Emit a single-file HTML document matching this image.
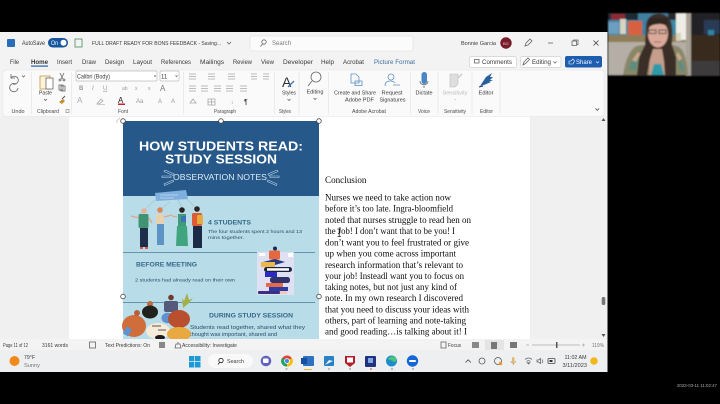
<!DOCTYPE html>
<html><head><meta charset="utf-8"><style>
html,body{margin:0;padding:0;background:#000;width:720px;height:404px;overflow:hidden}
svg{display:block}
text{font-family:"Liberation Sans",sans-serif;fill:#3a3a3a;font-size:6px}
.s{font-family:"Liberation Serif",serif;fill:#0c0c0c;font-size:9.4px}
.t{font-size:6.4px;fill:#3a3a3a}
.g{font-size:5px;fill:#4a4a4a;text-anchor:middle}
.r{font-size:5px;fill:#3a3a3a;text-anchor:middle}
.w{font-weight:bold;fill:#fff}
.b{font-size:4.6px;fill:#2a4d66}
.h{font-weight:bold;fill:#356789}
.ic{fill:none;stroke:#666;stroke-width:.8}
</style></head><body>
<svg width="720" height="404" viewBox="0 0 720 404" xmlns="http://www.w3.org/2000/svg">
<defs><filter id="bl" x="-5%" y="-5%" width="110%" height="110%"><feGaussianBlur stdDeviation="0.35"/></filter>
<filter id="bl2" x="-5%" y="-5%" width="110%" height="110%"><feGaussianBlur stdDeviation="0.9"/></filter></defs>
<rect width="720" height="404" fill="#000"/>
<g filter="url(#bl)">
<!-- window -->
<rect x="0" y="32" width="607.500" height="340" fill="#f3f3f3"/>
<!-- doc area -->
<rect x="0" y="116" width="607" height="223" fill="#f0f0f0"/>
<rect x="69" y="116" width="461" height="223" fill="#fff"/>
<!-- title bar -->
<rect x="7" y="39" width="8" height="8" rx="1" fill="#2b6cb8"/>
<text x="22" y="45" textLength="23" lengthAdjust="spacingAndGlyphs">AutoSave</text>
<rect x="48" y="38" width="20" height="9.500" rx="4.700" fill="#15559f"/>
<text x="51" y="45" textLength="7" lengthAdjust="spacingAndGlyphs" style="fill:#fff">On</text>
<circle cx="63.500" cy="42.700" r="3" fill="#fff"/>
<rect x="75" y="39" width="7" height="8" class="ic" style="stroke:#4d8a5a"/>
<text x="92" y="45" textLength="129" lengthAdjust="spacingAndGlyphs" style="font-size:5.800px">FULL DRAFT READY FOR BONS FEEDBACK - Saving...</text>
<path d="M227 42l2 2 2-2" class="ic"/>
<rect x="250" y="36" width="163" height="15" rx="2" fill="#fbfbfb" stroke="#e2e2e2" stroke-width=".7"/>
<circle cx="264" cy="42" r="2.200" class="ic"/><path d="M262.500 44l-2 2.500" class="ic"/>
<text x="272" y="45" textLength="19" lengthAdjust="spacingAndGlyphs" style="fill:#777">Search</text>
<text x="461" y="45" textLength="35" lengthAdjust="spacingAndGlyphs" style="font-size:5.800px">Bonnie Garcia</text>
<circle cx="506" cy="43" r="5.700" fill="#761a2c"/>
<text x="503" y="45" style="font-size:4px;fill:#e8c0c0">BG</text>
<path d="M525 46l1-3 4-4 2 2-4 4z" class="ic"/>
<path d="M548 43h5" class="ic"/>
<rect x="572" y="41" width="4.500" height="4.500" class="ic"/><path d="M573.500 41v-1h4.500v4.500h-1.300" class="ic"/>
<path d="M593.500 40.500l5 5m0-5l-5 5" class="ic" style="stroke:#444"/>
<!-- tabs -->
<text x="10" y="64" class="t" textLength="9" lengthAdjust="spacingAndGlyphs">File</text>
<text x="31" y="64" class="t" textLength="17" lengthAdjust="spacingAndGlyphs" style="font-weight:bold;fill:#333">Home</text>
<rect x="31" y="65.500" width="17" height="1.200" fill="#2b5f9e"/>
<text x="57" y="64" class="t" textLength="15" lengthAdjust="spacingAndGlyphs">Insert</text>
<text x="82" y="64" class="t" textLength="14" lengthAdjust="spacingAndGlyphs">Draw</text>
<text x="105" y="64" class="t" textLength="19" lengthAdjust="spacingAndGlyphs">Design</text>
<text x="133" y="64" class="t" textLength="19" lengthAdjust="spacingAndGlyphs">Layout</text>
<text x="161" y="64" class="t" textLength="30" lengthAdjust="spacingAndGlyphs">References</text>
<text x="200" y="64" class="t" textLength="24" lengthAdjust="spacingAndGlyphs">Mailings</text>
<text x="233" y="64" class="t" textLength="19" lengthAdjust="spacingAndGlyphs">Review</text>
<text x="261" y="64" class="t" textLength="13" lengthAdjust="spacingAndGlyphs">View</text>
<text x="283" y="64" class="t" textLength="30" lengthAdjust="spacingAndGlyphs">Developer</text>
<text x="321" y="64" class="t" textLength="13" lengthAdjust="spacingAndGlyphs">Help</text>
<text x="343" y="64" class="t" textLength="21" lengthAdjust="spacingAndGlyphs">Acrobat</text>
<text x="374" y="64" class="t" textLength="41" lengthAdjust="spacingAndGlyphs" style="fill:#3f6d9e">Picture Format</text>
<rect x="469.500" y="56.500" width="47" height="11" rx="2" fill="#fff" stroke="#cfcfcf" stroke-width=".7"/>
<rect x="474.500" y="59.500" width="4.500" height="3.500" class="ic"/>
<text x="482" y="64" textLength="30" lengthAdjust="spacingAndGlyphs">Comments</text>
<rect x="520.500" y="56.500" width="40.500" height="11" rx="2" fill="#fff" stroke="#cfcfcf" stroke-width=".7"/>
<path d="M523 65l1-3 4-4 1.500 1.500-4 4z" class="ic"/>
<text x="532" y="64" textLength="19" lengthAdjust="spacingAndGlyphs">Editing</text>
<path d="M553.500 61.500l1.500 1.500 1.500-1.500" class="ic"/>
<rect x="565" y="56" width="37" height="11.500" rx="2" fill="#1b5db0"/>
<text x="576" y="64" textLength="16" lengthAdjust="spacingAndGlyphs" style="fill:#fff">Share</text>
<path d="M569 64v-3h2l2-2 1.500 2-1.500 3z" fill="none" stroke="#fff" stroke-width=".6"/>
<path d="M596 61.500l1.500 1.500 1.500-1.500" fill="none" stroke="#fff" stroke-width=".6"/>
<!-- ribbon -->
<rect x="3" y="70" width="601" height="46.500" rx="3" fill="#fafafa" stroke="#e4e4e4" stroke-width=".6"/>
<g stroke="#e2e2e2" stroke-width=".6">
<path d="M31.500 72v42M71.500 72v42M183.500 72v42M274.500 72v42M299 72v42M328.500 72v42M410.500 72v42M438 72v42M472 72v42M500 72v42"/>
</g>
<!-- undo -->
<path d="M11 78a4 4 0 1 1 2 6M11 74v4h4" class="ic"/><path d="M22 75.500l1.500 1.500 1.500-1.500" class="ic"/>
<path d="M18 88a4.200 4.200 0 1 1-2-4" class="ic"/>
<text x="18" y="113" class="g" textLength="13" lengthAdjust="spacingAndGlyphs">Undo</text>
<!-- paste -->
<rect x="40" y="76" width="10" height="13" fill="#fbf2dd" stroke="#c89a3f" stroke-width=".8"/>
<rect x="46" y="78" width="7" height="11" fill="#fff" stroke="#555" stroke-width=".7"/>
<text x="45.500" y="94.500" class="r" textLength="13" lengthAdjust="spacingAndGlyphs">Paste</text>
<path d="M44 99l1.500 1.500 1.500-1.500" class="ic"/>
<path d="M60 73l3 6m1-6l-3 6" class="ic"/><circle cx="60" cy="80" r="1" class="ic"/><circle cx="64" cy="80" r="1" class="ic"/>
<rect x="59" y="85" width="4" height="5" class="ic"/><rect x="61" y="86" width="4" height="5" class="ic"/>
<path d="M59 102l4-3 2 2-3 3z" fill="#c98f2b"/><path d="M62 99l3-3" stroke="#555" stroke-width="1"/>
<text x="48" y="113" class="g" textLength="22" lengthAdjust="spacingAndGlyphs">Clipboard</text>
<rect x="66" y="109.500" width="3" height="3" class="ic" style="stroke-width:.5"/>
<!-- font -->
<rect x="76" y="71" width="81" height="10" rx="1" fill="#fff" stroke="#bdbdbd" stroke-width=".7"/>
<text x="77" y="78.500" textLength="33" lengthAdjust="spacingAndGlyphs">Calibri (Body)</text>
<path d="M154 75.500l1 1 1-1" class="ic"/>
<rect x="160" y="71" width="19" height="10" rx="1" fill="#fff" stroke="#bdbdbd" stroke-width=".7"/>
<text x="161" y="78.500">11</text><path d="M175.500 75.500l1 1 1-1" class="ic"/>
<g style="font-size:6px">
<text x="79" y="90" style="font-weight:bold;fill:#999">B</text>
<text x="92" y="90" style="font-style:italic;fill:#999">I</text>
<text x="103" y="90" style="text-decoration:underline;fill:#999">U</text>
<text x="122" y="90" style="fill:#999;font-size:5px">ab</text>
<text x="135" y="90" style="fill:#999;font-size:5px">x</text>
<text x="148" y="90" style="fill:#999;font-size:5px">x</text>
<text x="160" y="91" style="fill:#777;font-size:8px">A</text>
<text x="77" y="103" style="fill:#aaa;font-size:8px">A</text>
<text x="118" y="103" style="fill:#222;font-size:8px">A</text>
<text x="136" y="103" style="fill:#999">Aa</text>
<text x="158" y="103" style="fill:#999">A</text>
<text x="171" y="103" style="fill:#999">A</text>
</g>
<rect x="118" y="103.500" width="7" height="1.500" fill="#d0242b"/>
<path d="M97 104l4-5 2 2-4 3z" class="ic" style="stroke:#aaa"/><rect x="97" y="104" width="8" height="1" fill="#ccc"/>
<text x="123" y="113" class="g" textLength="10" lengthAdjust="spacingAndGlyphs">Font</text>
<!-- paragraph -->
<g stroke="#a8a8a8" stroke-width=".8" fill="none">
<path d="M189 74h7M189 76.500h7M189 79h7M208 74h7M208 76.500h7M208 79h7M228 74h7M228 76.500h7M228 79h7M251 74h6M251 76.500h6M251 79h6M263 74h6M263 76.500h6M263 79h6"/>
<path d="M189 86h7M189 88.500h7M189 91h7M201 86h7M201 88.500h7M201 91h7M214 86h7M214 88.500h7M214 91h7M226 86h7M226 88.500h7M226 91h7M240 86h7M240 88.500h7M240 91h7"/>
<path d="M190 103l3-4 3 4zM208 99h7v6h-7zM208 102h7M211.500 99v6"/>
</g>
<text x="231" y="104" style="font-size:5px;fill:#888">↕</text>
<text x="244" y="104" style="font-size:7px;fill:#333">¶</text>
<text x="225" y="113" class="g" textLength="22" lengthAdjust="spacingAndGlyphs">Paragraph</text>
<!-- styles -->
<text x="282" y="87" style="font-size:14px;fill:#333">A</text>
<path d="M288 87l6-6" stroke="#3f73b5" stroke-width="1.300"/>
<text x="289" y="94.500" class="r" textLength="14" lengthAdjust="spacingAndGlyphs">Styles</text>
<path d="M287.500 99l1.500 1.500 1.500-1.500" class="ic"/>
<text x="285" y="113" class="g" textLength="12" lengthAdjust="spacingAndGlyphs">Styles</text>
<!-- editing -->
<circle cx="316" cy="77" r="5" class="ic"/><path d="M312 81l-4 5" class="ic"/>
<text x="315" y="93.500" class="r" textLength="17" lengthAdjust="spacingAndGlyphs">Editing</text>
<path d="M313.500 98l1.500 1.500 1.500-1.500" class="ic"/>
<!-- adobe -->
<path d="M351 74h5l3 3v6h-8z" fill="none" stroke="#5e92bf" stroke-width=".8"/><rect x="355" y="81" width="7" height="4.500" fill="none" stroke="#5e92bf" stroke-width=".8"/>
<text x="355" y="94.500" class="r" textLength="42" lengthAdjust="spacingAndGlyphs">Create and Share</text>
<text x="359.500" y="101.500" class="r" textLength="29" lengthAdjust="spacingAndGlyphs" style="font-size:5px">Adobe PDF</text>
<circle cx="391" cy="77" r="3" fill="none" stroke="#5e92bf" stroke-width=".8"/><path d="M385 86c0-5 4-5 6-5s3 1 4 2M393 85h7" fill="none" stroke="#5e92bf" stroke-width=".8"/>
<text x="392" y="94.500" class="r" textLength="21" lengthAdjust="spacingAndGlyphs">Request</text>
<text x="392.500" y="101.500" class="r" textLength="26" lengthAdjust="spacingAndGlyphs">Signatures</text>
<text x="369" y="113" class="g" textLength="34" lengthAdjust="spacingAndGlyphs">Adobe Acrobat</text>
<!-- dictate -->
<rect x="421.500" y="72" width="5.500" height="12" rx="2.700" fill="#4a86c8"/>
<path d="M420 81c0 5 8 5 8 0M424 85.500v2.500" class="ic"/>
<text x="424" y="94.500" class="r" textLength="17" lengthAdjust="spacingAndGlyphs">Dictate</text>
<text x="424" y="113" class="g" textLength="12" lengthAdjust="spacingAndGlyphs">Voice</text>
<!-- sensitivity -->
<path d="M450 74h8v10l-3 3h-5z" fill="#dedede" stroke="#bbb" stroke-width=".6"/><path d="M458 78l4-4" stroke="#ccc" stroke-width="1.500"/>
<text x="455" y="94.500" class="r" textLength="25" lengthAdjust="spacingAndGlyphs" style="fill:#bbb">Sensitivity</text>
<rect x="454" y="99.500" width="2" height=".6" fill="#bbb"/>
<text x="455" y="113" class="g" textLength="22" lengthAdjust="spacingAndGlyphs">Sensitivity</text>
<!-- editor -->
<path d="M480 86l6-9 6-4-2 4h3l-3 3h3l-4 2h2l-7 3z" fill="#2b5f9e"/><path d="M479 87l4-1" stroke="#1a3d6e"/>
<text x="486" y="94.500" class="r" textLength="15" lengthAdjust="spacingAndGlyphs">Editor</text>
<text x="486.500" y="113" class="g" textLength="13" lengthAdjust="spacingAndGlyphs">Editor</text>
<path d="M595.500 108.500l1.800 1.800 1.800-1.800" class="ic" style="stroke:#444"/>
<!-- scrollbar -->
<path d="M601.500 121h4l-2-3zM601.500 334h4l-2 3z" fill="#555"/>
<rect x="601.700" y="297" width="3.600" height="8" rx="1.500" fill="#777"/>
<!-- resize arrow -->
<path d="M117 123c-1-3 2-4 3-5" fill="none" stroke="#ccc" stroke-width="1"/>
<!-- infographic -->
<rect x="123" y="121" width="196" height="75" fill="#28598a"/>
<rect x="123" y="196" width="196" height="143" fill="#b8dde9"/>
<text x="139" y="150.300" class="w" textLength="164" lengthAdjust="spacingAndGlyphs" style="font-size:13px">HOW STUDENTS READ:</text>
<text x="165" y="163.700" class="w" textLength="112" lengthAdjust="spacingAndGlyphs" style="font-size:13px">STUDY SESSION</text>
<text x="173" y="180" textLength="94" lengthAdjust="spacingAndGlyphs" style="font-size:8.300px;fill:#dbeaf2">OBSERVATION NOTES</text>
<g stroke="#bcd6e8" stroke-width=".6" fill="none">
<path d="M165 170l9 4-1 1.500-9-4zM162 176h9v1.500h-9zM164 184l9-4 .7 1.500-9 4zM277 170l-9 4 1 1.500 9-4zM279 176h-9v1.500h9zM277 184l-9-4-.7 1.500 9 4z"/>
</g>
<!-- bubble -->
<path d="M155 193l31-3 2 9-32 2z" fill="#7fb0dd"/>
<path d="M155 200l-15 14M170 202l-9 7M178 200l5 10M187 199l10 10" stroke="#7ba8bf" stroke-width=".4"/>
<path d="M160 195h18M160 198h14" stroke="#c2dcf0" stroke-width=".7"/>
<!-- students -->
<g>
<circle cx="144" cy="211" r="2.700" fill="#e9b097"/><rect x="138.500" y="214" width="10" height="14" rx="1.500" fill="#3f9473"/><rect x="140" y="228" width="8" height="19" fill="#1f2f4a"/><path d="M139 218l-8-2M149 218l3 5" stroke="#e0a58c" stroke-width="1.400"/><path d="M140 247h3v2h-3zM145 247h3v2h-3z" fill="#d55"/>
<circle cx="160" cy="210" r="2.800" fill="#d98659"/><rect x="156" y="214" width="8" height="11" fill="#e6d2b0"/><rect x="157" y="224" width="7" height="21" fill="#5d93c5"/><path d="M164 217l8-2" stroke="#e0a58c" stroke-width="1.300"/>
<circle cx="182" cy="210" r="2.800" fill="#2c2224"/><rect x="178" y="214" width="8" height="12" fill="#3c9c7a"/><path d="M177 226h10l1 20h-12z" fill="#3fa47f"/><path d="M177 217l-5-1" stroke="#e0a58c" stroke-width="1.300"/><rect x="181" y="216" width="5" height="6" fill="#3f6fb5"/>
<circle cx="197" cy="209" r="2.800" fill="#2d2624"/><rect x="192" y="213" width="10" height="13" rx="1.500" fill="#dc5b38"/><rect x="193" y="226" width="9" height="22" fill="#1d2a45"/><rect x="197" y="215" width="6" height="9" rx="1" fill="#e8a93c"/>
</g>
<text x="208" y="224.500" textLength="43" lengthAdjust="spacingAndGlyphs" class="h" style="font-size:6px">4 STUDENTS</text>
<text x="208" y="233" class="b" textLength="94" lengthAdjust="spacingAndGlyphs">The four students spent 2 hours and 13</text>
<text x="208" y="239" class="b" textLength="36" lengthAdjust="spacingAndGlyphs">mins together.</text>
<rect x="123" y="252" width="192" height=".9" fill="#5b8ba6"/>
<text x="136" y="266.500" class="h" textLength="61" lengthAdjust="spacingAndGlyphs" style="font-size:6.400px">BEFORE MEETING</text>
<text x="135" y="281.500" class="b" textLength="100" lengthAdjust="spacingAndGlyphs">2 students had already read on their own</text>
<!-- stack -->
<rect x="257" y="252" width="37" height="43" fill="#dfe0f2"/>
<rect x="259" y="253" width="6" height="3" fill="#fff"/><rect x="288" y="253" width="5" height="4" fill="#fff"/>
<circle cx="275" cy="248.500" r="2" fill="#1c2b55"/><rect x="269" y="250.500" width="11" height="9" rx="1.500" fill="#e5693f"/>
<path d="M263 262l12-3 10 3-10 3z" fill="#253a80"/>
<rect x="261" y="262" width="14" height="5" fill="#eab84e"/><rect x="264" y="267" width="28" height="5" rx="2.500" fill="#1d2340"/><rect x="267" y="268.200" width="22" height="2.500" fill="#fff"/><rect x="265" y="272" width="12" height="5" fill="#2a2ac0"/><rect x="270" y="277" width="20" height="6" rx="2.500" fill="#30306a"/><rect x="266" y="283" width="17" height="4" fill="#e8694a"/><rect x="269" y="287" width="19" height="4" fill="#2e3ba5"/><rect x="258" y="291" width="22" height="3" rx="1" fill="#3a2f85"/><rect x="280" y="291" width="7" height="3" fill="#f4c9ba"/>
<rect x="123" y="302" width="192" height=".9" fill="#5b8ba6"/>
<text x="209" y="317.500" class="h" textLength="84" lengthAdjust="spacingAndGlyphs" style="font-size:6.400px">DURING STUDY SESSION</text>
<text x="190" y="329" class="b" textLength="115" lengthAdjust="spacingAndGlyphs" style="font-size:5px">Students read together, shared what they</text>
<text x="190" y="336" class="b" textLength="87" lengthAdjust="spacingAndGlyphs" style="font-size:5px">thought was important, shared and</text>
<!-- group illustration -->
<g>
<path d="M187 293l-3 8-2-3 1 10 6-5 4-5-4 2z" fill="#a5b04a"/>
<ellipse cx="158" cy="331" rx="12" ry="8" fill="#f5ebd8"/>
<ellipse cx="134" cy="326" rx="12" ry="11" fill="#cf6d3a"/>
<circle cx="137" cy="313" r="3" fill="#b9603a"/>
<rect x="125" y="327" width="6" height="8" fill="#5e92cf" transform="rotate(30 127 330)"/>
<circle cx="150" cy="304" r="3" fill="#bf6a3f"/><ellipse cx="150" cy="312" rx="8" ry="6.500" fill="#20201f"/>
<circle cx="171" cy="297.500" r="2.800" fill="#6d3a2a"/><rect x="164" y="301" width="14" height="11" rx="2" fill="#555a7a"/>
<ellipse cx="167.500" cy="318" rx="6" ry="5.200" fill="#5e92cf"/>
<ellipse cx="179" cy="319" rx="11" ry="9" fill="#b8502f"/>
<ellipse cx="179" cy="334" rx="12" ry="7" fill="#e9a93f"/>
<ellipse cx="160" cy="337.500" rx="5" ry="2.500" fill="#1d1a1a"/>
<path d="M152 325h9v2h-9zM158 329h8v2h-8z" fill="#3a3028" opacity=".4"/>
</g>
<!-- handles -->
<g fill="#fff" stroke="#444" stroke-width=".8">
<circle cx="123" cy="121" r="2.300"/><circle cx="221" cy="121" r="2.300"/><circle cx="319" cy="121" r="2.300"/><circle cx="123" cy="296.500" r="2.300"/><circle cx="319" cy="296.500" r="2.300"/>
</g>
<!-- doc text -->
<text class="s" x="325" y="183" textLength="41.500" lengthAdjust="spacingAndGlyphs">Conclusion</text>
<text class="s" x="325" y="200.500" textLength="126" lengthAdjust="spacingAndGlyphs">Nurses we need to take action now</text>
<text class="s" x="325" y="211.700" textLength="128" lengthAdjust="spacingAndGlyphs">before it’s too late. Ingra-bloomfield</text>
<text class="s" x="325" y="223" textLength="146" lengthAdjust="spacingAndGlyphs">noted that nurses struggle to read hen on</text>
<text class="s" x="325" y="234" textLength="130" lengthAdjust="spacingAndGlyphs">the Job! I don’t want that to be you! I</text>
<text class="s" x="325" y="245.500" textLength="144" lengthAdjust="spacingAndGlyphs">don’t want you to feel frustrated or give</text>
<text class="s" x="325" y="256.700" textLength="131" lengthAdjust="spacingAndGlyphs">up when you come across important</text>
<text class="s" x="325" y="267.800" textLength="138" lengthAdjust="spacingAndGlyphs">research information that’s relevant to</text>
<text class="s" x="325" y="279" textLength="139" lengthAdjust="spacingAndGlyphs">your job! Insteadl want you to focus on</text>
<text class="s" x="325" y="290" textLength="132" lengthAdjust="spacingAndGlyphs">taking notes, but not just any kind of</text>
<text class="s" x="325" y="301.200" textLength="138" lengthAdjust="spacingAndGlyphs">note. In my own research I discovered</text>
<text class="s" x="325" y="312.300" textLength="144" lengthAdjust="spacingAndGlyphs">that you need to discuss your ideas with</text>
<text class="s" x="325" y="323.500" textLength="141" lengthAdjust="spacingAndGlyphs">others, part of learning and note-taking</text>
<text class="s" x="325" y="334.700" textLength="142" lengthAdjust="spacingAndGlyphs">and good reading…is talking about it! I</text>
<path d="M337.500 229h3.500M337.500 236.500h3.500M339.200 229v7.500" stroke="#222" stroke-width=".8" fill="none"/>
<!-- status bar -->
<rect x="0" y="339" width="607.500" height="11" fill="#f3f3f3"/>
<text x="3" y="347" textLength="25" lengthAdjust="spacingAndGlyphs" style="font-size:5px">Page 11 of 12</text>
<text x="42" y="347" textLength="26" lengthAdjust="spacingAndGlyphs" style="font-size:5px">3161 words</text>
<rect x="89.500" y="342" width="6" height="6" class="ic"/>
<text x="105" y="347" textLength="45" lengthAdjust="spacingAndGlyphs" style="font-size:5px">Text Predictions: On</text>
<rect x="159" y="342" width="6" height="6" fill="#888"/>
<path d="M175 348h6l-1-4h-4zM178 342v2" class="ic"/>
<text x="182" y="347" textLength="55" lengthAdjust="spacingAndGlyphs" style="font-size:5px">Accessibility: Investigate</text>
<rect x="441" y="342" width="5" height="6" class="ic"/>
<text x="448" y="347" textLength="13" lengthAdjust="spacingAndGlyphs" style="font-size:5px">Focus</text>
<rect x="472" y="342" width="7" height="6" fill="#888"/>
<rect x="485" y="340" width="19" height="10" fill="#e4e4e4"/><rect x="491" y="342" width="6" height="7" fill="#777"/>
<rect x="510" y="342" width="7" height="6" fill="#777"/>
<path d="M526 345h3M532 345h48M582 345h3M583.500 343.500v3" stroke="#aaa" stroke-width=".7"/>
<rect x="556" y="342" width="1.500" height="6" fill="#555"/>
<text x="592" y="347" textLength="12" lengthAdjust="spacingAndGlyphs" style="font-size:5px;fill:#777">119%</text>
<!-- taskbar -->
<rect x="0" y="350" width="607.500" height="22" fill="#eeeff1"/>
<circle cx="14.500" cy="361" r="5" fill="#f08a1c"/>
<text x="24" y="359" textLength="11" lengthAdjust="spacingAndGlyphs" style="font-size:5.200px">79°F</text>
<text x="24" y="367" textLength="16" lengthAdjust="spacingAndGlyphs" style="font-size:5.200px;fill:#777">Sunny</text>
<path d="M189 356h5.300v5.300H189zM195 356h5.500v5.300H195zM189 362h5.300v5.500H189zM195 362h5.500v5.500H195z" fill="#1d9ad6"/>
<rect x="208" y="354" width="45" height="14" rx="7" fill="#f9f9f9"/>
<circle cx="221" cy="360.500" r="2.200" fill="none" stroke="#222" stroke-width=".8"/><path d="M219.500 362.500l-1.500 2" stroke="#222" stroke-width=".8"/>
<text x="227" y="363" textLength="17" lengthAdjust="spacingAndGlyphs" style="font-size:5.600px">Search</text>
<circle cx="266" cy="361" r="5.300" fill="#6264c0"/><rect x="263" y="358.500" width="5.500" height="4.500" rx="1" fill="#fff"/>
<circle cx="287" cy="361" r="5.500" fill="#dd4437"/><path d="M287 361l5-3a5.500 5.500 0 0 1-5 8.500z" fill="#f4c20d"/><path d="M287 361v5.500a5.500 5.500 0 0 1-5-8.500z" fill="#1fa463"/><circle cx="287" cy="361" r="2.400" fill="#4285f4" stroke="#fff" stroke-width=".8"/>
<rect x="303" y="356" width="11" height="10" rx="1" fill="#2d6fc2"/><rect x="301" y="358" width="6" height="6" fill="#164f9c"/><rect x="304" y="369" width="8" height="1" fill="#e5b73b"/>
<rect x="324" y="356" width="10" height="10" rx="1" fill="#2a7fc9"/><path d="M325 365l4-5 4 1" fill="#e6f2fb"/>
<path d="M345 356h10v7l-5 4-5-4z" fill="#b31e2a"/><rect x="347" y="357.500" width="6" height="5" fill="#fff"/>
<rect x="365" y="356" width="11" height="11" rx="1" fill="#24317e"/><rect x="368" y="358" width="5" height="5" fill="#7ea9e0"/>
<circle cx="391.500" cy="361" r="5.500" fill="#1c8ecb"/><path d="M388 359a5 5 0 0 1 8-1c1 2 0 4-2 4-2-2-5-2-6-3z" fill="#4dc27a"/>
<circle cx="412.500" cy="361" r="5.700" fill="#1666d8"/><rect x="409" y="360" width="7" height="2" rx="1" fill="#fff"/>
<g fill="#888"><rect x="285.500" y="368.500" width="2" height="1"/><rect x="328" y="368.500" width="2" height="1"/><rect x="349" y="368.500" width="2" height="1"/><rect x="370" y="368.500" width="2" height="1" fill="#c44"/><rect x="391" y="368.500" width="2" height="1"/><rect x="412" y="368.500" width="2" height="1"/></g>
<path d="M465.500 362.500l2.700-2.700 2.700 2.700" class="ic" style="stroke:#444"/>
<circle cx="482" cy="361" r="3" class="ic" style="stroke:#555"/>
<circle cx="498" cy="361" r="3.500" class="ic" style="stroke:#555"/><circle cx="500.500" cy="363.500" r="1.700" fill="#e89a2a"/>
<rect x="512" y="357" width="2.500" height="6" rx="1.200" fill="#e2b877"/><path d="M511 361c0 3 4.500 3 4.500 0M513.300 363v2" class="ic" style="stroke:#c9a06a"/>
<path d="M525 359.500c2-2 5-2 7 0M526.500 361.500c1.500-1.300 2.500-1.300 4 0M528.500 364l-1.200-1.200h2.400z" class="ic" style="stroke:#666"/>
<path d="M537 360h1.500l2-1.500v5l-2-1.500H537zM542 359.500c1 1 1 2.500 0 3.500" class="ic"/>
<rect x="548" y="358.500" width="7" height="5" rx="1" class="ic" style="stroke:#444"/><rect x="549.500" y="360" width="3" height="2" fill="#333"/>
<text x="564.500" y="359" textLength="22" lengthAdjust="spacingAndGlyphs" style="font-size:5.200px">11:02 AM</text>
<text x="562.500" y="367" textLength="24.500" lengthAdjust="spacingAndGlyphs" style="font-size:5.200px">3/11/2023</text>
<circle cx="594" cy="361" r="3.800" fill="#f2b71d"/>
<!-- watermark -->
<text x="677" y="387" textLength="40" lengthAdjust="spacingAndGlyphs" style="font-size:4.500px;fill:#aaa">2023-03-11 11:02:47</text>
</g>
<!-- webcam -->
<g filter="url(#bl2)">
<rect x="608" y="13" width="112" height="63" fill="#2b2c2e"/>
<rect x="608" y="13" width="60" height="22" fill="#3f7f9f"/>
<rect x="608" y="13" width="30" height="7" fill="#1a2a33"/>
<rect x="611" y="14" width="14" height="6" fill="#8c2a35"/>
<rect x="608" y="22" width="11" height="12" fill="#6b9fbf"/>
<rect x="620" y="19" width="6" height="15" fill="#d6d4c2"/>
<rect x="628" y="21" width="14" height="14" fill="#d7603f"/>
<rect x="668" y="20" width="8" height="15" fill="#3b8aa8"/>
<rect x="608" y="35" width="78" height="7" fill="#8f7d58"/>
<rect x="608" y="42" width="78" height="33" fill="#b4aea6"/>
<rect x="676" y="13" width="12" height="27" fill="#f0ede6"/>
<rect x="676" y="33" width="5" height="8" fill="#d9d2bc"/>
<rect x="686" y="13" width="5" height="63" fill="#a8a296"/>
<rect x="691" y="13" width="29" height="22" fill="#222228"/>
<rect x="704" y="20" width="16" height="14" fill="#2a3a55"/>
<rect x="691" y="35" width="29" height="26" fill="#39291f"/>
<rect x="708" y="30" width="6" height="5" fill="#2f85a5"/>
<rect x="691" y="61" width="29" height="15" fill="#3d3a3a"/>
<!-- shoulders/tattoos -->
<path d="M623 75c2-12 6-26 14-29l6-1h30l6 2c6 4 8 16 9 28z" fill="#8a8668"/>
<path d="M628 70l6-14 5 2-3 12zM680 58l5 12-4 2-3-10z" fill="#5b8d7f"/>
<path d="M632 60l6-8 3 2-5 8zM678 52l4 6-3 3-3-6z" fill="#c9a98a"/>
<!-- chest & teal top -->
<path d="M650 46h16l1 29h-18z" fill="#c59e8c"/>
<path d="M651 75l3-11h7l3 11z" fill="#2e9aa8"/>
<!-- hair -->
<path d="M646 27c0-18 25-18 26 0 1 6 0 12 0 18l4 12 0 18h-11l-1-14 -2-12h-9l-3 10-3 16h-10l2-18 6-12c0-6 1-12 1-18z" fill="#3a2d28"/>
<ellipse cx="658" cy="34" rx="10" ry="13.500" fill="#d9a99a"/>
<path d="M648 29c2-6 18-7 20-1l-1-10h-18z" fill="#2e2522"/>
<path d="M649 30h7v3.500h-7zM659 30h7v3.500h-7z" fill="none" stroke="#4a3d3d" stroke-width=".9"/>
<path d="M654 42h7" stroke="#a8655f" stroke-width="1"/>
</g>
</svg>
</body></html>
